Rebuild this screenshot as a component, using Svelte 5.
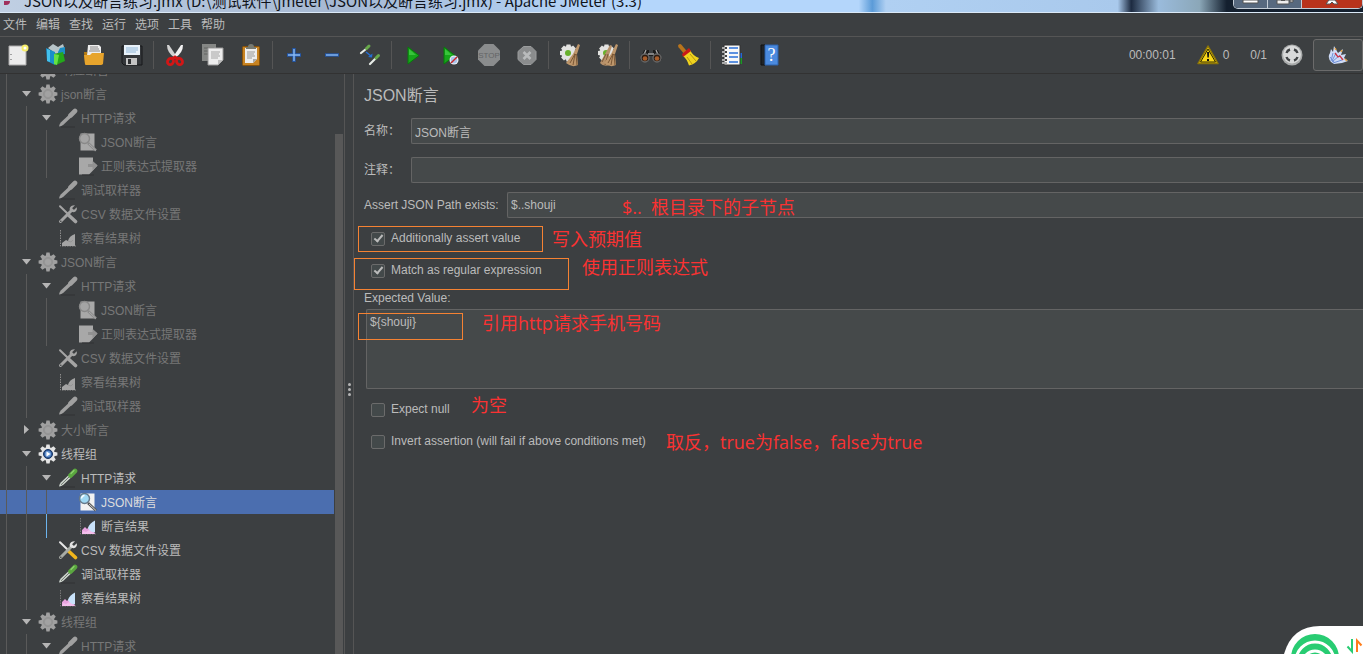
<script lang="ts">
  type Row = {
    label: string;
    icon: string;
    depth: number;
    on?: boolean;
    arrow?: 'open' | 'closed';
    selected?: boolean;
    active?: boolean;
  };

  const menus = ['文件', '编辑', '查找', '运行', '选项', '工具', '帮助'];

  // '|' marks a separator
  const tools = [
    'new', 'templates', 'open', 'save', '|',
    'cut', 'copy', 'paste', '|',
    'expand', 'collapse', 'toggle', '|',
    'start', 'startNoPause', 'stop', 'shutdown', '|',
    'clear', 'clearAll', '|',
    'search', 'broom', '|',
    'functions', 'help'
  ];

  const rows: Row[] = [
    { label: '响应断言', icon: 'gear', depth: 0, arrow: 'closed' },
    { label: 'json断言', icon: 'gear', depth: 0, arrow: 'open' },
    { label: 'HTTP请求', icon: 'pipette', depth: 1, arrow: 'open' },
    { label: 'JSON断言', icon: 'assert', depth: 2 },
    { label: '正则表达式提取器', icon: 'extract', depth: 2 },
    { label: '调试取样器', icon: 'pipette', depth: 1 },
    { label: 'CSV 数据文件设置', icon: 'config', depth: 1 },
    { label: '察看结果树', icon: 'chart', depth: 1 },
    { label: 'JSON断言', icon: 'gear', depth: 0, arrow: 'open' },
    { label: 'HTTP请求', icon: 'pipette', depth: 1, arrow: 'open' },
    { label: 'JSON断言', icon: 'assert', depth: 2 },
    { label: '正则表达式提取器', icon: 'extract', depth: 2 },
    { label: 'CSV 数据文件设置', icon: 'config', depth: 1 },
    { label: '察看结果树', icon: 'chart', depth: 1 },
    { label: '调试取样器', icon: 'pipette', depth: 1 },
    { label: '大小断言', icon: 'gear', depth: 0, arrow: 'closed' },
    { label: '线程组', icon: 'gear', depth: 0, arrow: 'open', on: true },
    { label: 'HTTP请求', icon: 'pipette', depth: 1, arrow: 'open', on: true },
    { label: 'JSON断言', icon: 'assert', depth: 2, on: true, selected: true },
    { label: '断言结果', icon: 'chart', depth: 2, on: true, active: true },
    { label: 'CSV 数据文件设置', icon: 'config', depth: 1, on: true },
    { label: '调试取样器', icon: 'pipette', depth: 1, on: true },
    { label: '察看结果树', icon: 'chart', depth: 1, on: true },
    { label: '线程组', icon: 'gear', depth: 0, arrow: 'open' },
    { label: 'HTTP请求', icon: 'pipette', depth: 1, arrow: 'open' }
  ];

  let name = $state('JSON断言');
  let comment = $state('');
  let path = $state('$..shouji');
  let expected = $state('${shouji}');
  let assertValue = $state(true);
  let asRegex = $state(true);
  let expectNull = $state(false);
  let invert = $state(false);

  // marker boxes and notes pinned over the form
  const marks = [
    { x: 4, y: 152, w: 185, h: 26 },
    { x: 0, y: 184, w: 215, h: 32 },
    { x: 4, y: 239, w: 105, h: 27 }
  ];
  const notes = [
    { x: 268, y: 121, text: '$..  根目录下的子节点' },
    { x: 198, y: 153, text: '写入预期值' },
    { x: 228, y: 181, text: '使用正则表达式' },
    { x: 128, y: 237, text: '引用http请求手机号码' },
    { x: 117, y: 319, text: '为空' },
    { x: 312, y: 356, text: '取反，true为false，false为true' }
  ];

  const teeth = [0, 45, 90, 135, 180, 225, 270, 315];
</script>

{#snippet treeIcon(icon: string, on: boolean)}
  <svg width="20" height="20" viewBox="0 0 20 20" aria-hidden="true">
    {#if icon === 'gear'}
      <g fill={on ? '#e4e4e4' : '#a0a0a0'}>
        {#each teeth as a}
          <path d="M7.6 5 8.4.6h3.2l.8 4.400z" transform="rotate({a} 10 10)" />
        {/each}
        <circle cx="10" cy="10" r="6.800" />
      </g>
      <circle cx="10" cy="10" r="4.500" fill={on ? '#2f5c9c' : '#979797'} stroke={on ? '#16325f' : '#939393'} />
      <circle cx="10" cy="10" r="3" fill={on ? '#6d9bd6' : '#a2a2a2'} />
      {#if on}<path d="m8.500 7.500 4 2.500-4 2.500z" fill="#fff" />{/if}
    {:else if icon === 'pipette'}
      <path d="M3 19h14" stroke="#303335" />
      <path d="M1 18.600q.2-2.600 2-4.400l8-7.400 2.400 2.400-8 7.600Q3.600 18.400 1 18.600z" fill={on ? '#cfd6cf' : '#a0a0a0'} />
      {#if on}<path d="M3 16.800 11 9" stroke="#6b726b" />{/if}
      <path d="m12.500 7.500 4.500-4.500" stroke={on ? '#5aa63f' : '#a0a0a0'} stroke-width="4.600" stroke-linecap="round" />
      {#if on}<path d="m13 5.500 3-3" stroke="#8fd072" stroke-width="1.200" stroke-linecap="round" />{/if}
    {:else if icon === 'assert'}
      <path d="M2.500 1.500h14v17h-14z" fill={on ? '#f2f2f2' : '#a8a8a8'} />
      <path d="m10 11 8 7.500" stroke={on ? '#555' : '#8c8c8c'} stroke-width="2.600" />
      <path d="m11 12 7 6.500" stroke={on ? '#ccc' : '#aaa'} stroke-width="1" />
      <circle cx="6.500" cy="6.500" r="5" fill={on ? '#9fd8f3' : '#a4a4a4'} stroke={on ? '#66798a' : '#898989'} stroke-width="1.400" />
      {#if on}<path d="M3.500 6.500q.5-3 3-3" fill="none" stroke="#fff" stroke-width="1.300" />{/if}
    {:else if icon === 'extract'}
      <path d="M1 1.500h14v4l4.500 4-5.500 6-3 3H1z" fill="#a8a8a8" />
      <path d="M10 8h4.500V5l5 4.500-5 4.500v-3H10" fill="#919191" />
      <path d="M4 19h12" stroke="#303335" />
    {:else if icon === 'config'}
      <path d="M2 2.200 10 10" stroke={on ? '#e7e7e7' : '#a4a4a4'} stroke-width="2" stroke-linecap="round" />
      <path d="m11 11.500 6.500 6" stroke={on ? '#f0b51c' : '#a4a4a4'} stroke-width="3.600" stroke-linecap="round" />
      <path d="M2.500 17.500 14 6" stroke={on ? '#a8aca6' : '#a4a4a4'} stroke-width="3" stroke-linecap="round" />
      <path d="M17 1.200 14 4.200l1.800 1.800 3-2.700q.8 4.200-3.300 5-4.500-.4-3.800-4 1-3.300 5.300-3.100z" fill={on ? '#e2e2e2' : '#a4a4a4'} />
      <circle cx="2.800" cy="17.300" r=".8" fill="#3c3f41" />
    {:else}
      <path d="M2.500 2v16H18" fill="none" stroke={on ? '#777' : '#8c8c8c'} stroke-dasharray="1.500 1" />
      {#if on}
        <path d="M4 18v-4l3-3 2 2 2-2 4 1 2 6z" fill="#e9a3df" />
        <path d="M10 12q1.500-5 7-7.500V16q-3 1-5-1z" fill="#c8e2fa" />
        <path d="m4 18 1-3 3 1 3-2 6 4z" fill="#f4bfec" />
      {:else}
        <path d="M4 18v-3l4-3 2 1q1-5 7-7v12z" fill="#a4a4a4" />
        <path d="m10 13 3 1 2-2" fill="none" stroke="#949494" />
      {/if}
    {/if}
  </svg>
{/snippet}

{#snippet toolIcon(icon: string)}
  <svg width="24" height="24" viewBox="0 0 24 24" aria-hidden="true">
    {#if icon === 'new'}
      <path d="M3 3h17v19H3z" fill="#ececec" stroke="#aaa" />
      <circle cx="19" cy="5" r="3.500" fill="#f5ec6a" />
      <circle cx="19" cy="5" r="1.500" fill="#fff" />
      <path d="M5 11v1m0 4v1" stroke="#888" stroke-width="1.500" />
    {:else if icon === 'templates'}
      <path d="m4 5 5-4 5 3 5-3 2 6-9 4z" fill="#b7c4c8" />
      <path d="m2 5 9 4v13l-8-4z" fill="#198fc9" />
      <path d="m3 6 3 1v12l-3-1z" fill="#43c0ec" />
      <path d="m16 5 5-1v7l-7 1V9z" fill="#1c8ec4" />
      <path d="m10 11 9-2 2 9-9 4-2-1z" fill="#24a81b" />
      <path d="m10 11 5 1-2 10-3-1z" fill="#66e044" />
    {:else if icon === 'open'}
      <path d="M2 9h3l1 2h15v10H3z" fill="#b87d12" />
      <path d="M6 2h11l2 2v9H5z" fill="#eee" />
      <path d="M8 4h8M8 6h9M7 8h11" stroke="#888" />
      <path d="M2 12h6l2-2h12l-1 11q-1 1-2 1H4q-1 0-1-1z" fill="#e7a42c" />
    {:else if icon === 'save'}
      <path d="M2 3h20v19H4l-2-2z" fill="#34373a" stroke="#17191a" />
      <path d="M4 2h16v10H4z" fill="#e8f1f9" />
      <path d="M6 5h12M6 7h12M6 9h10" stroke="#91b7d8" />
      <path d="M6 15h11v7H6z" fill="#c4c4c4" />
      <path d="M8 16h3v5H8z" fill="#303234" />
    {:else if icon === 'cut'}
      <path d="M4 2q0 8 8 13l2-1L6 2z" fill="#d2d2d2" />
      <path d="M20 2q0 8-8 13l-2-1 8-12z" fill="#f1f1f1" />
      <g fill="none" stroke="#d31616" stroke-width="2.800"><ellipse cx="7.500" cy="18.500" rx="2.800" ry="3.300" transform="rotate(40 7.500 18.500)" /><ellipse cx="16.500" cy="18.500" rx="2.800" ry="3.300" transform="rotate(-40 16.500 18.500)" /><path d="m9 16 3-2 3 2" /></g>
    {:else if icon === 'copy'}
      <path d="M1 1h14v17H1z" fill="#858785" />
      <path d="M3 5h10M3 8h10M3 11h10" stroke="#626462" />
      <path d="M7 5h15v12l-5 5H7z" fill="#ededed" stroke="#999" />
      <path d="M10 9h9M10 11h8M10 13h9M10 15h7" stroke="#a5a5a5" />
      <path d="M22 17h-5v5z" fill="#bdbdbd" />
    {:else if icon === 'paste'}
      <rect x="3.500" y="3.500" width="17" height="19" rx="1" fill="#c78322" stroke="#87520b" />
      <path d="M6 5h12v11l-4 4H6z" fill="#ededed" />
      <path d="M8 9h8M8 11h7M8 13h8M8 15h5" stroke="#999" />
      <path d="M7 6V4h2q0-3 3-3t3 3h2v2z" fill="#777a72" />
      <path d="M18 16h-4v4z" fill="#aaa" />
    {:else if icon === 'expand'}
      <path d="M12 5v14M5 12h14" stroke="#2357a8" stroke-width="3.400" />
      <path d="M12 6v12M6 12h12" stroke="#8ab9ef" stroke-width="1.400" />
    {:else if icon === 'collapse'}
      <path d="M5 12h14" stroke="#2357a8" stroke-width="3.400" />
      <path d="M6 12h12" stroke="#8ab9ef" stroke-width="1.400" />
    {:else if icon === 'toggle'}
      <g stroke-linecap="round">
        <path d="m3 10 5-4" stroke="#e7ece7" stroke-width="2.200" /><path d="m8.500 5.500 2.500-2.500" stroke="#68a94b" stroke-width="3" />
        <path d="m12 21 5-5" stroke="#e7ece7" stroke-width="2.200" /><path d="m18 15 2.500-2.500" stroke="#68a94b" stroke-width="3" />
      </g>
      <path d="m8 9 5 4" stroke="#246fd4" stroke-width="1.500" /><path d="m14.500 10.500-.5 4-4-.5z" fill="#246fd4" />
    {:else if icon === 'start'}
      <path d="m7 4 11 8.500L7 21z" fill="#17a51b" stroke="#077a0b" /><path d="M8 6v6h7z" fill="#38c53b" />
    {:else if icon === 'startNoPause'}
      <path d="m5 4 11 8.500L5 21z" fill="#17a51b" stroke="#077a0b" /><path d="M6 6v6h7z" fill="#38c53b" />
      <circle cx="15" cy="17" r="4.500" fill="#f1f4fa" /><circle cx="15" cy="17" r="3.400" fill="#a9c4ea" />
      <path d="m12 20 6-6" stroke="#c92525" stroke-width="1.500" />
    {:else if icon === 'stop'}
      <path d="M7.500 1h9l6.500 6.500v9L16.500 23h-9L1 16.500v-9z" fill="#8a8c8d" />
      <text x="12" y="15" text-anchor="middle" fill="#636566" font-family="Liberation Sans, sans-serif" font-size="8">STOP</text>
    {:else if icon === 'shutdown'}
      <path d="M8.500 3.500h7.500l5 5v8l-5 5H8.500l-5.500-5v-8z" fill="#8a8c8d" stroke="#9a9c9d" />
      <path d="m8.500 9 7 7m0-7-7 7" stroke="#b9bbbc" stroke-width="2.600" />
    {:else if icon === 'clear' || icon === 'clearAll'}
      <g fill="#e3e3e1">
        {#each teeth as a}<path d="M8 4 8.500 1.500h4l.5 2.500z" transform="rotate({a} 10.500 10)" />{/each}
        <circle cx="10.500" cy="10" r="7" />
      </g>
      <circle cx="10" cy="10" r="3" fill="#68b02c" />
      {#if icon === 'clearAll'}
        <path d="m14 2 2 1-3 9 1 10q-7 2-10-2l5-9z" fill="#b5906a" /><path d="m6 19 4-8m-1 11 3-11" stroke="#7b5837" />
      {/if}
      <path d="m20 1 2 1-3 9 1 11q-6 3-12-2l7-9z" fill="#bd966b" />
      <path d="m12 20 5-9m-2 11 2-11m2 11-1-11M16 11l3 1" stroke="#7b5837" />
    {:else if icon === 'search'}
      <path d="M5 7h5v3h4V7h5l4 10H14v-4h-4v4H1z" fill="#1b1b1b" />
      <path d="m7 7-3 7m13-7 3 7M9 11h6" stroke="#a7a7a7" stroke-width="1.300" />
      <circle cx="6" cy="15" r="4" fill="#2b1b12" stroke="#666" stroke-width="1.400" /><circle cx="18" cy="15" r="4" fill="#2b1b12" stroke="#666" stroke-width="1.400" />
      <circle cx="6" cy="15.500" r="2.300" fill="#a75d2b" /><circle cx="18" cy="15.500" r="2.300" fill="#a75d2b" />
    {:else if icon === 'broom'}
      <path d="m3 3 5 6" stroke="#b8741c" stroke-width="3.800" stroke-linecap="round" />
      <path d="m6 13 7-6q3 6 9 8-3 6-10 7.500Q10 16 6 13z" fill="#f0d31e" />
      <path d="m5 11 7-6 2 3-8 6z" fill="#ca1818" />
      <path d="m10 14 5 7m-2-10 6 7" stroke="#b8970f" />
    {:else if icon === 'functions'}
      <path d="M20 10h2v5h-2z" fill="#2367d7" /><path d="M20 15h2v6h-2z" fill="#1a9a25" />
      <path d="M4 2h16v20H4z" fill="#f8f8f8" stroke="#333" />
      <path d="M9 5h9M9 10h9M9 14h9M9 19h9" stroke="#2a6fd8" stroke-width="1.400" />
      <path d="M2 5h5M2 9h5M2 13h5M2 17h5M2 20h5" stroke="#aaa" stroke-width="1.800" /><path d="M5 5h2M5 9h2M5 13h2M5 17h2" stroke="#222" stroke-width="1.500" />
    {:else if icon === 'help'}
      <path d="M3 2h4v20H3z" fill="#202428" stroke="#111" />
      <path d="M7 2h13v20H7z" fill="#4b8ade" stroke="#2c62ad" />
      <text x="13.500" y="18" text-anchor="middle" fill="#fff" font-family="Liberation Serif, serif" font-size="18">?</text>
    {/if}
  </svg>
{/snippet}

<div class="window">
  <header class="titlebar">
    <span class="titlebar__logo"></span>
    <span class="titlebar__text">JSON以及断言练习.jmx (D:\测试软件\jmeter\JSON以及断言练习.jmx) - Apache JMeter (3.3)</span>
    <div class="titlebar__controls">
      <button class="win" aria-label="最小化"><svg width="18" height="8"><path d="M1 0h15v3H1z" fill="#fff" stroke="#555" /></svg></button>
      <button class="win" aria-label="还原"><svg width="18" height="8"><path d="M1 0h12v4H1zM14 0h3v2h-3z" fill="#eee" stroke="#555" /><path d="M5 0h4v1H5z" fill="#555" /></svg></button>
      <button class="win win--close" aria-label="关闭"><svg width="18" height="8"><path d="M6 0h6l3 4h-4L9 2 7 4H3z" fill="#fff" stroke="#555" /></svg></button>
    </div>
  </header>

  <nav class="menubar">
    {#each menus as menu}
      <button>{menu}</button>
    {/each}
  </nav>

  <div class="toolbar" role="toolbar">
    {#each tools as tool}
      {#if tool === '|'}
        <span class="toolbar__sep"></span>
      {:else}
        <button class="tool" aria-label={tool} disabled={tool === 'stop' || tool === 'shutdown'}>{@render toolIcon(tool)}</button>
      {/if}
    {/each}
    <div class="status">
      <span>00:00:01</span>
      <button class="status__warn" aria-label="日志">
        <svg width="22" height="20" viewBox="0 0 22 20">
          <path d="M11 1 21 18.500H1z" fill="#f5cf0f" stroke="#8c7508" stroke-width="1.500" stroke-linejoin="round" />
          <path d="M11 4 18.500 17h-15z" fill="#f8d71a" stroke="#2c2702" />
          <path d="M10 7h2.200l-.4 5.500h-1.400zM10 14h2v2h-2z" fill="#111" />
        </svg>
        0
      </button>
      <span>0/1</span>
      <svg class="status__run" width="22" height="22" viewBox="0 0 22 22">
        <circle cx="11" cy="11" r="10.500" fill="#a9abab" />
        <circle cx="11" cy="10.500" r="9" fill="#d9dada" />
        <g fill="none" stroke="#3f4244" stroke-width="2.400">
          <path d="M5.500 9q.8-2.700 3.500-3.500M13 5.500q2.700.8 3.500 3.500M16.500 13q-.8 2.700-3.500 3.500M9 16.500q-2.700-.8-3.500-3.500" />
        </g>
      </svg>
      <button class="feather" aria-label="JMeter">
        <svg width="22" height="20" viewBox="0 0 22 20">
          <path d="M4 17Q0 12 3 8l1-4 2 3 1-6 4 7 5-4-2 6 5-1-2 4 4 3-6 2-8 1z" fill="#cfdcf6" />
          <path d="m4 16 2-8m-1 8 4-8m-4 9 8-7m-7 8 9-3M3 12l4 5" fill="none" stroke="#6f90d8" />
          <path d="m8 8 3 4 2-1 3 4" fill="none" stroke="#cc3344" stroke-width="1.300" />
          <path d="m8 3 1 2M14 7l1-2M18 14l2 2" stroke="#e3a145" stroke-width="1.500" />
        </svg>
      </button>
    </div>
  </div>

  <main class="body">
    <aside class="sidebar">
      <ul class="tree">
        {#each rows as row}
          <li class="row" class:row--on={row.on} class:row--selected={row.selected} class:row--active={row.active}>
            <span class="root-guide"></span>
            {#each { length: row.depth } as _}<span class="guide"></span>{/each}
            <span class="arrow">
              {#if row.arrow === 'open'}
                <svg width="10" height="10"><path d="M0 2h9L4.500 7.500z" fill="currentColor" /></svg>
              {:else if row.arrow === 'closed'}
                <svg width="10" height="10"><path d="M2 0v9l5-4.500z" fill="currentColor" /></svg>
              {/if}
            </span>
            {@render treeIcon(row.icon, !!row.on)}
            <span class="row__label">{row.label}</span>
          </li>
        {/each}
      </ul>
      <div class="scroll"><div class="scroll__thumb"></div></div>
    </aside>

    <div class="divider"><i></i><i></i><i></i></div>

    <section class="panel">
      <h1>JSON断言</h1>
      <div class="field">
        <label for="name">名称：</label>
        <input id="name" type="text" bind:value={name} />
      </div>
      <div class="field">
        <label for="comment">注释：</label>
        <input id="comment" type="text" bind:value={comment} />
      </div>
      <div class="field field--path">
        <label for="path">Assert JSON Path exists:</label>
        <input id="path" type="text" bind:value={path} />
      </div>
      <label class="check"><input type="checkbox" bind:checked={assertValue} />Additionally assert value</label>
      <label class="check"><input type="checkbox" bind:checked={asRegex} />Match as regular expression</label>
      <label class="area-label" for="expected">Expected Value:</label>
      <textarea id="expected" bind:value={expected}></textarea>
      <label class="check"><input type="checkbox" bind:checked={expectNull} />Expect null</label>
      <label class="check"><input type="checkbox" bind:checked={invert} />Invert assertion (will fail if above conditions met)</label>

      {#each marks as m}
        <div class="mark" style="left: {m.x}px; top: {m.y}px; width: {m.w}px; height: {m.h}px"></div>
      {/each}
      {#each notes as n}
        <p class="note" style="left: {n.x}px; top: {n.y}px">{n.text}</p>
      {/each}
    </section>
  </main>

  <div class="float">
    <svg width="79" height="28" viewBox="0 0 79 28" aria-hidden="true">
      <path d="M0 28Q8 0 36 0h43v28z" fill="#fff" />
      <circle cx="31" cy="32" r="24" fill="#28cc72" />
      <path d="M12 35a19 19 0 0 1 38 0M19 37a12 12 0 0 1 24 0" fill="none" stroke="#fff" stroke-width="3" />
      <path d="M68 13v12.500l-4.500-5" fill="none" stroke="#28cc72" stroke-width="2" />
      <path d="M73 26V14.500l4.500 5" fill="none" stroke="#ff7d1a" stroke-width="2" />
    </svg>
  </div>
</div>

<style>
  :global(body) {
    margin: 0;
  }

  .window {
    height: 100vh;
    display: flex;
    flex-direction: column;
    overflow: hidden;
    position: relative;
    background: #3c3f41;
    color: #bbb;
    font: 12px/16px 'Liberation Sans', 'Noto Sans CJK SC', sans-serif;
  }

  button {
    border: 0;
    padding: 0;
    background: none;
    color: inherit;
    font: inherit;
  }

  .titlebar {
    flex: none;
    height: 12px;
    display: flex;
    align-items: flex-end;
    overflow: hidden;
    border-bottom: 1px solid #dbe9f7;
    background: linear-gradient(90deg, #c0cfe3 0, #a6b9d3 25%, #b4d6fb 45%, #b4d6fb 60%, #b4d6fb 63%, #5b9bd8 64%, #b0d0f2 65%, #a9c9ec 82%, #1d2b41 83%, #9abbdc 85%, #8ba7b8 88%, #14202f 90%, #14202f 100%);
  }

  .titlebar__logo {
    width: 6px;
    height: 4px;
    margin: 0 14px 7px 4px;
    background: #a0305c;
    border-radius: 0 0 6px 0;
  }

  .titlebar__text {
    color: #10131a;
    font: 15px/22px 'Noto Sans CJK SC', sans-serif;
    white-space: nowrap;
  }

  .titlebar__controls {
    display: flex;
    margin-left: auto;
    align-self: flex-start;
    border: 1px solid #c3ccd6;
    border-top: 0;
    border-radius: 0 0 5px 5px;
    overflow: hidden;
  }

  .win {
    width: 34px;
    height: 8px;
    display: flex;
    justify-content: center;
    background: #57697f;
    border-right: 1px solid #c3ccd6;
  }

  .win--close {
    width: 60px;
    background: #b8331c;
    border-right: 0;
  }

  .menubar {
    flex: none;
    height: 23px;
    display: flex;
    align-items: center;
    gap: 9px;
    padding-left: 3px;
    border-bottom: 1px solid #555;
  }

  .toolbar {
    flex: none;
    height: 36px;
    display: flex;
    align-items: center;
    margin-left: -1px;
    border-bottom: 1px solid #323232;
  }

  .toolbar__sep {
    width: 1px;
    height: 28px;
    margin: 0 2px;
    background: #555;
  }

  .tool {
    width: 38px;
    height: 32px;
    display: flex;
    align-items: center;
    justify-content: center;
  }

  .status {
    display: flex;
    align-items: center;
    margin-left: auto;
    gap: 21px;
  }

  .status__warn {
    display: flex;
    align-items: center;
    gap: 4px;
  }

  .status__run {
    margin-left: -7px;
  }

  .feather {
    width: 50px;
    height: 32px;
    display: flex;
    align-items: center;
    justify-content: center;
    margin-left: -11px;
    border: 1px solid #6b6b6b;
    border-radius: 3px;
    background: #45494a;
  }

  .body {
    flex: 1;
    min-height: 0;
    display: flex;
  }

  .sidebar {
    flex: none;
    width: 344px;
    display: flex;
    overflow: hidden;
    border-right: 1px solid #555;
  }

  /* list is scrolled part-way through its first row */
  .tree {
    flex: 1;
    list-style: none;
    margin: -16px 0 0;
    padding: 0;
  }

  .row {
    height: 24px;
    display: flex;
    align-items: center;
    color: #777;
    white-space: nowrap;
  }

  .row--on {
    color: #bbb;
  }

  .row--selected {
    background: #4b6eaf;
    color: #ddd;
  }

  .root-guide,
  .guide {
    flex: none;
    align-self: stretch;
    width: 16px;
    box-sizing: border-box;
    border-left: 1px solid #5a5a5a;
  }

  .root-guide {
    margin-left: 6px;
  }

  .guide {
    margin-left: 4px;
  }

  .row--active .guide + .guide {
    border-color: #6cb4ee;
  }

  .arrow {
    flex: none;
    width: 16px;
    display: flex;
    color: #b5b5b5;
  }

  .row svg {
    flex: none;
  }

  .row__label {
    margin-left: 3px;
    padding-top: 1px;
  }

  .scroll {
    flex: none;
    width: 10px;
    padding-top: 60px;
    display: flex;
  }

  .scroll__thumb {
    flex: 1;
    margin: 0 1px;
    background: #585858;
  }

  .divider {
    flex: none;
    width: 9px;
    display: flex;
    flex-direction: column;
    align-items: center;
    gap: 2px;
    padding-top: 309px;
    box-sizing: border-box;
    border-right: 1px solid #555;
  }

  .divider i {
    width: 3px;
    height: 3px;
    border-radius: 50%;
    background: #b5b5b5;
  }

  .panel {
    flex: 1;
    min-width: 0;
    display: flex;
    flex-direction: column;
    align-items: flex-start;
    position: relative;
    padding: 12px 0 0 10px;
  }

  h1 {
    margin: 0 0 12px;
    font-size: 16px;
    line-height: 20px;
    font-weight: 400;
  }

  .field {
    align-self: stretch;
    display: flex;
    align-items: center;
    margin-bottom: 13px;
  }

  .field label {
    width: 47px;
  }

  .field + .field--path {
    margin: -4px 0 8px;
  }

  .field--path label {
    width: 143px;
  }

  input[type='text'],
  textarea {
    box-sizing: border-box;
    border: 1px solid #646464;
    border-right: 0;
    border-radius: 2px 0 0 2px;
    background: #45494a;
    color: #bbb;
    font: inherit;
    outline: none;
  }

  input[type='text'] {
    flex: 1;
    min-width: 0;
    height: 26px;
    padding: 0 3px;
  }

  .check {
    height: 24px;
    display: flex;
    align-items: center;
    gap: 6px;
    margin: 0 0 8px 7px;
  }

  input[type='checkbox'] {
    appearance: none;
    position: relative;
    box-sizing: border-box;
    width: 14px;
    height: 14px;
    margin: 2px 0 0;
    border: 1px solid #6b6b6b;
    border-radius: 2px;
    background: #43494a;
  }

  input[type='checkbox']:checked::after {
    content: '';
    position: absolute;
    left: 4px;
    top: 0;
    width: 3px;
    height: 7px;
    border: solid #bbb;
    border-width: 0 2px 2px 0;
    transform: rotate(40deg);
  }

  .area-label {
    margin-bottom: 3px;
  }

  textarea {
    align-self: stretch;
    height: 80px;
    margin: 0 0 8px 2px;
    padding: 4px 3px;
    resize: none;
  }

  .mark {
    position: absolute;
    box-sizing: border-box;
    border: 1px solid #f58233;
  }

  .note {
    position: absolute;
    margin: 0;
    color: #fa3232;
    font: 18px/24px 'Open Sans', 'Noto Sans CJK SC', sans-serif;
    white-space: pre;
  }

  .float {
    position: absolute;
    right: 0;
    bottom: 0;
    height: 28px;
  }
</style>
